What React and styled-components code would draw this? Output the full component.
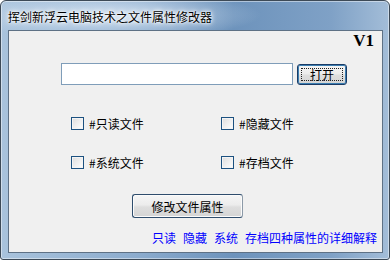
import React from "react";
import styled, { createGlobalStyle } from "styled-components";

const Global = createGlobalStyle`
  html, body { margin: 0; padding: 0; background: #ffffff; }
  body { width: 390px; height: 260px; overflow: hidden; }
  * { box-sizing: border-box; }
`;

const CJK = `"Noto Sans CJK SC", "Noto Sans", sans-serif`;

const Window = styled.div`
  width: 390px;
  height: 260px;
  border: 1px solid #3d4a57;
  border-radius: 6px 6px 3px 3px;
  background:
    radial-gradient(ellipse 150px 24px at 110px 14px, rgba(230, 240, 250, 0.75), rgba(230, 240, 250, 0) 100%),
    linear-gradient(90deg, #a9c3dc 0%, #8cacce 35%, #6d93bc 60%, #7fa1c6 85%, #a3bdd8 100%);
  box-shadow: inset 0 0 0 1px rgba(255, 255, 255, 0.45);
  display: flex;
  flex-direction: column;
  padding: 0 6px 6px 7px;
  overflow: hidden;
`;

const TitleBar = styled.div`
  height: 29px;
  display: flex;
  align-items: center;
  padding-left: 0;
  padding-top: 1px;
  font-family: ${CJK};
  font-size: 12px;
  color: #000;
  text-shadow: 0 0 6px #ffffff, 0 0 4px #ffffff, 0 0 2px #ffffff;
  white-space: nowrap;
`;

const Client = styled.div`
  flex: 1;
  background: #f0f0f0;
  border: 1px solid #5e7185;
  display: flex;
  flex-direction: column;
  font-family: ${CJK};
  font-size: 12px;
  color: #000;
`;

const VersionRow = styled.div`
  display: flex;
  justify-content: flex-end;
  padding: 0 8px 0 0;
  height: 20px;
  font-family: "Liberation Serif", serif;
  font-weight: bold;
  font-size: 17px;
  line-height: 20px;
  color: #000;
`;

const FileRow = styled.div`
  display: flex;
  align-items: center;
  gap: 4px;
  margin-top: 12px;
  padding-left: 52px;
`;

const PathInput = styled.div`
  width: 232px;
  height: 22px;
  background: #ffffff;
  border: 1px solid #7f9db9;
`;

const Button = styled.div`
  display: flex;
  align-items: center;
  justify-content: center;
  width: ${(p) => p.$w}px;
  height: ${(p) => p.$h}px;
  border: 1px solid ${(p) => (p.$default ? "#1a3b66" : "#2f4d6d")};
  border-right-color: ${(p) => (p.$default ? "#1a3b66" : "#8c9aa8")};
  border-radius: 3px;
  background: linear-gradient(180deg, #f6f6f6 0%, #ececec 45%, #dedede 55%, #d4d4d4 100%);
  font-family: ${CJK};
  font-size: 12px;
  color: #000;
  box-shadow: ${(p) => (p.$default ? "inset 0 0 0 1px #3c7fb1" : "inset 0 0 0 1px #fbfbfb")};
  position: relative;
`;

const FocusRect = styled.span`
  position: absolute;
  inset: 3px;
  border: 1px dotted #222;
  pointer-events: none;
`;

const CheckGrid = styled.div`
  display: grid;
  grid-template-columns: 150px auto;
  row-gap: 26px;
  margin-top: 32px;
  padding-left: 62px;
`;

const CheckItem = styled.label`
  display: flex;
  align-items: center;
  gap: 5px;
  height: 13px;
  line-height: 13px;
  white-space: nowrap;
`;

const Box = styled.span`
  width: 13px;
  height: 13px;
  border: 1px solid #1c5180;
  background: linear-gradient(135deg, #dcdcdc 0%, #eeeeee 50%, #ffffff 100%);
  box-shadow: inset 0 0 0 1px #f4f4f4;
  flex-shrink: 0;
`;

const ActionRow = styled.div`
  display: flex;
  margin-top: 25px;
  padding-left: 123px;
`;

const LinkRow = styled.div`
  display: flex;
  gap: 7px;
  margin-top: 13px;
  padding-left: 143px;
  color: #0000ff;
  line-height: 13px;
  white-space: nowrap;
`;

const Link = styled.span`
  color: #0000ff;
  cursor: pointer;
`;

const Check = ({ children }) => (
  <CheckItem>
    <Box />
    <span>{children}</span>
  </CheckItem>
);

export default function App() {
  return (
    <>
      <Global />
      <Window>
        <TitleBar>挥剑新浮云电脑技术之文件属性修改器</TitleBar>
        <Client>
          <VersionRow>V1</VersionRow>
          <FileRow>
            <PathInput />
            <Button $w={50} $h={21} $default>
              <FocusRect />
              打开
            </Button>
          </FileRow>
          <CheckGrid>
            <Check>#只读文件</Check>
            <Check>#隐藏文件</Check>
            <Check>#系统文件</Check>
            <Check>#存档文件</Check>
          </CheckGrid>
          <ActionRow>
            <Button $w={111} $h={24}>修改文件属性</Button>
          </ActionRow>
          <LinkRow>
            <Link>只读</Link>
            <Link>隐藏</Link>
            <Link>系统</Link>
            <Link>存档四种属性的详细解释</Link>
          </LinkRow>
        </Client>
      </Window>
    </>
  );
}
